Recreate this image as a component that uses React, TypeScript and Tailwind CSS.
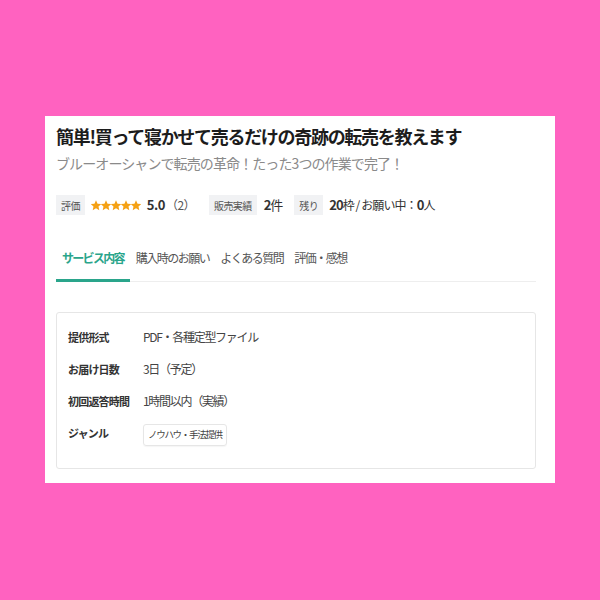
const jp = { fontFamily: '"Noto Sans CJK JP", "Noto Sans", sans-serif' };

function Badge({ children }: { children: React.ReactNode }) {
  return (
    <span className="flex h-[20px] items-center bg-[#f1f2f4] px-[5px] text-[10px] tracking-[-0.6px] text-[#555]">
      {children}
    </span>
  );
}

function Star() {
  return (
    <svg viewBox="1 1 22 22" className="h-[11px] w-[10px]" fill="#f5a114">
      <path d="M12 0.5l3.4 7.4 8.1.9-6 5.5 1.7 8L12 18.2l-7.2 4.1 1.7-8-6-5.5 8.1-.9z" />
    </svg>
  );
}

function Label({ children }: { children: React.ReactNode }) {
  return <div className="w-[75px] text-[11px] font-bold tracking-[-0.8px] text-[#333]">{children}</div>;
}

function Row({ label, children }: { label: string; children: React.ReactNode }) {
  return (
    <div className="flex h-[32px] items-center">
      <Label>{label}</Label>
      <div className="text-[12px] tracking-[-1.3px] text-[#444]">{children}</div>
    </div>
  );
}

const tabs = ['購入時のお願い', 'よくある質問', '評価・感想'];

export default function App() {
  return (
    <div className="h-[600px] w-[600px] bg-[#ff62c0] pl-[45px] pt-[116px]" style={jp}>
      <div className="h-[367px] w-[510px] bg-white pl-[11px] pr-[19px] pt-[6px]">
        <h1 className="text-[18px] font-bold leading-[28px] tracking-[-1.3px] text-[#1c1c1c]">
          簡単!買って寝かせて売るだけの奇跡の転売を教えます
        </h1>
        <p className="mt-[1px] text-[14px] leading-[24px] tracking-[-0.9px] text-[#8a8a8a]">
          ブルーオーシャンで転売の革命！たった3つの作業で完了！
        </p>

        <div className="mt-[20px] flex h-[20px] items-center text-[12px] text-[#333]">
          <Badge>評価</Badge>
          <span className="ml-[6px] flex">
            <Star />
            <Star />
            <Star />
            <Star />
            <Star />
          </span>
          <span className="ml-[6px] text-[13px] font-bold tracking-[-0.5px]">5.0</span>
          <span className="ml-[1px] tracking-[-0.5px] text-[#555]">（2）</span>
          <span className="ml-[14px]"><Badge>販売実績</Badge></span>
          <span className="ml-[7px] text-[13px] tracking-[-1px]"><b>2</b>件</span>
          <span className="ml-[12px]"><Badge>残り</Badge></span>
          <span className="ml-[6px] text-[12px] tracking-[-0.9px]">
            <b className="text-[13px]">20</b>枠 / お願い中：<b className="text-[13px]">0</b>人
          </span>
        </div>

        <div className="mt-[22px] flex border-b border-[#eeeeee]">
          <div className="-mb-px border-b-[3px] border-[#2aa58b] px-[6px] pb-[11px] pt-[11px] text-[12px] font-bold leading-[20px] tracking-[-1.7px] text-[#2aa58b]">
            サービス内容
          </div>
          {tabs.map((t) => (
            <div
              key={t}
              className="-mb-px ml-[1px] border-b-[3px] border-transparent px-[5px] pb-[11px] pt-[11px] text-[12px] leading-[20px] tracking-[-1.5px] text-[#555]"
            >
              {t}
            </div>
          ))}
        </div>

        <div className="mt-[30px] h-[157px] rounded-[3px] border border-[#e6e6e6] pl-[11px] pt-[8px]">
          <Row label="提供形式">PDF・各種定型ファイル</Row>
          <Row label="お届け日数">3日（予定）</Row>
          <Row label="初回返答時間">1時間以内（実績）</Row>
          <div className="flex h-[32px] items-center">
            <Label>ジャンル</Label>
            <span className="mt-[3px] flex h-[22px] items-center rounded-[3px] border border-[#e6e6e6] px-[4px] text-[9.5px] tracking-[-1.3px] text-[#444] shadow-[0_1px_1px_rgba(0,0,0,0.04)]">
              ノウハウ・手法提供
            </span>
          </div>
        </div>
      </div>
    </div>
  );
}
